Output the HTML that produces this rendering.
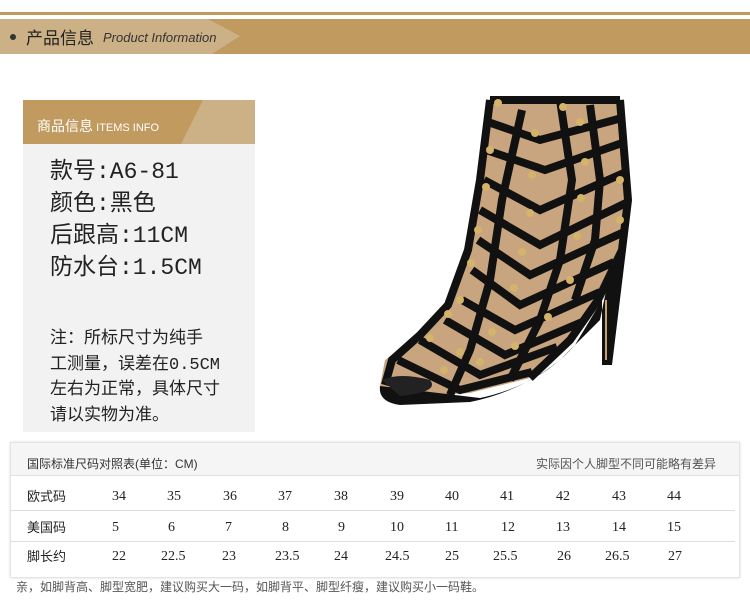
<!DOCTYPE html>
<html><head><meta charset="utf-8"><style>
*{margin:0;padding:0;box-sizing:border-box}
body{width:750px;height:604px;background:#fff;position:relative;overflow:hidden;font-family:"Liberation Sans","Noto Sans CJK SC",sans-serif;color:#222}
.abs{position:absolute}
</style></head><body>
<div class="abs" style="left:0;top:12px;width:750px;height:3px;background:#c09a5e"></div>
<svg class="abs" style="left:0;top:19px" width="750" height="35">
<rect x="0" y="0" width="750" height="35" fill="#c09a5e"/>
<polygon points="0,0 208,0 240,17 212,35 0,35" fill="#cdb186"/>
<circle cx="13" cy="18" r="3" fill="#333"/>
</svg>
<div class="abs" style="left:26px;top:27px;font-size:17px;color:#222;font-family:'Noto Sans CJK SC',sans-serif;line-height:20px">产品信息</div>
<div class="abs" style="left:103px;top:30px;font-size:13px;font-style:italic;color:#333;line-height:16px">Product Information</div>

<div class="abs" style="left:23px;top:100px;width:232px;height:332px;background:#f2f2f2"></div>
<svg class="abs" style="left:23px;top:100px" width="232" height="44">
<rect width="232" height="44" fill="#c09a5e"/>
<polygon points="180,0 232,0 232,44 158,44" fill="#cdb186"/>
</svg>
<div class="abs" style="left:37px;top:117px;font-size:14px;color:#fff;line-height:18px;font-family:'Noto Sans CJK SC',sans-serif">商品信息 <span style="font-size:11px;font-family:'Liberation Sans'">ITEMS INFO</span></div>
<div class="abs" style="left:50px;top:156px;font-size:23px;line-height:32px;color:#222;font-family:'Liberation Mono','Noto Sans CJK SC',monospace">款号:A6-81<br>颜色:黑色<br>后跟高:11CM<br>防水台:1.5CM</div>
<div class="abs" style="left:50px;top:327px;font-size:17px;line-height:25.5px;color:#222;font-family:'Liberation Mono','Noto Sans CJK SC',monospace">注：所标尺寸为纯手<br>工测量，误差在0.5CM<br>左右为正常，具体尺寸<br>请以实物为准。</div>

<svg class="abs" style="left:0;top:0" width="750" height="440">
<polygon points="490,97 620,97 630,200 624,250 600,300 570,340 530,378 470,393 395,398 380,386 385,360 420,335 448,305 468,250 480,180" fill="#c8a57e"/>
<g stroke="#111" stroke-width="8" fill="none" stroke-linejoin="miter">
<polyline points="490,100 620,100"/>
<polyline points="488,122 540,140 622,118"/>
<polyline points="486,150 545,170 625,142"/>
<polyline points="484,180 540,210 626,172"/>
<polyline points="480,210 540,245 628,202"/>
<polyline points="478,240 530,275 624,232"/>
<polyline points="472,270 520,305 614,262"/>
<polyline points="462,300 515,330 600,292"/>
<polyline points="445,320 505,355 582,322"/>
<polyline points="420,340 480,375 557,347"/>
<polyline points="398,360 460,390 532,372"/>
<polyline points="490,100 480,180 468,250 448,305 420,335 392,360 385,385"/>
<polyline points="560,100 572,180 560,260 540,320 510,380"/>
<polyline points="620,100 628,200 622,250 598,300 570,340 530,378"/>
<polyline points="522,110 502,200 490,280 470,350 450,395"/>
<polyline points="590,105 600,180 595,240 575,300"/>
</g>
<path d="M380,386 Q378,402 400,405 L470,402 Q520,392 560,360 L600,320 L612,262 L626,250 L612,365 L602,365 L602,300 L575,345 Q540,385 480,398 Z" fill="#111"/>
<path d="M606,300 L606,360" stroke="#c8a06a" stroke-width="2"/>
<path d="M382,380 Q400,372 430,380 Q440,392 400,396 Z" fill="#222"/>
<g fill="#d4b36a"><circle cx="498" cy="103" r="4"/><circle cx="563" cy="107" r="4"/><circle cx="580" cy="122" r="4"/><circle cx="535" cy="133" r="4"/><circle cx="490" cy="150" r="4"/><circle cx="585" cy="162" r="4"/><circle cx="532" cy="175" r="4"/><circle cx="486" cy="187" r="4"/><circle cx="581" cy="198" r="4"/><circle cx="530" cy="213" r="4"/><circle cx="478" cy="230" r="4"/><circle cx="577" cy="236" r="4"/><circle cx="522" cy="252" r="4"/><circle cx="471" cy="263" r="4"/><circle cx="570" cy="280" r="4"/><circle cx="514" cy="288" r="4"/><circle cx="460" cy="300" r="4"/><circle cx="548" cy="317" r="4"/><circle cx="448" cy="314" r="4"/><circle cx="492" cy="332" r="4"/><circle cx="430" cy="338" r="4"/><circle cx="515" cy="346" r="4"/><circle cx="460" cy="352" r="4"/><circle cx="444" cy="370" r="4"/><circle cx="480" cy="362" r="4"/><circle cx="620" cy="180" r="4"/><circle cx="620" cy="220" r="4"/></g>
</svg>

<div class="abs" style="left:10px;top:442px;width:730px;height:136px;border:1px solid #e4e4e4;box-shadow:0 0 3px #ddd;background:#fff"></div>
<div class="abs" style="left:11px;top:443px;width:728px;height:33px;background:#f5f5f5;border-bottom:1px solid #e0e0e0"></div>
<div class="abs" style="left:27px;top:455px;font-size:12px;color:#333">国际标准尺码对照表(单位：CM)</div>
<div class="abs" style="left:536px;top:455px;font-size:12px;color:#555">实际因个人脚型不同可能略有差异</div>
<div class="abs" style="left:10px;top:510px;width:725px;height:1px;background:#ddd"></div>
<div class="abs" style="left:10px;top:541px;width:725px;height:1px;background:#ddd"></div>
<div class="abs" style="left:27px;top:489px;font-size:13px;line-height:16px">欧式码</div>
<div class="abs" style="left:27px;top:520px;font-size:13px;line-height:16px">美国码</div>
<div class="abs" style="left:27px;top:549px;font-size:13px;line-height:16px">脚长约</div>
<div class="abs" style="left:0;top:489px;width:750px;font-family:'Liberation Serif',serif;font-size:14px;line-height:16px">
<span class="abs" style="left:112px">34</span><span class="abs" style="left:167px">35</span><span class="abs" style="left:223px">36</span><span class="abs" style="left:278px">37</span><span class="abs" style="left:334px">38</span><span class="abs" style="left:390px">39</span><span class="abs" style="left:445px">40</span><span class="abs" style="left:500px">41</span><span class="abs" style="left:556px">42</span><span class="abs" style="left:612px">43</span><span class="abs" style="left:667px">44</span></div>
<div class="abs" style="left:0;top:520px;width:750px;font-family:'Liberation Serif',serif;font-size:14px;line-height:16px">
<span class="abs" style="left:112px">5</span><span class="abs" style="left:168px">6</span><span class="abs" style="left:225px">7</span><span class="abs" style="left:282px">8</span><span class="abs" style="left:338px">9</span><span class="abs" style="left:390px">10</span><span class="abs" style="left:445px">11</span><span class="abs" style="left:501px">12</span><span class="abs" style="left:556px">13</span><span class="abs" style="left:612px">14</span><span class="abs" style="left:667px">15</span></div>
<div class="abs" style="left:0;top:549px;width:750px;font-family:'Liberation Serif',serif;font-size:14px;line-height:16px">
<span class="abs" style="left:112px">22</span><span class="abs" style="left:161px">22.5</span><span class="abs" style="left:222px">23</span><span class="abs" style="left:275px">23.5</span><span class="abs" style="left:334px">24</span><span class="abs" style="left:385px">24.5</span><span class="abs" style="left:445px">25</span><span class="abs" style="left:493px">25.5</span><span class="abs" style="left:557px">26</span><span class="abs" style="left:605px">26.5</span><span class="abs" style="left:668px">27</span></div>
<div class="abs" style="left:16px;top:580px;font-size:12px;color:#555;line-height:14px">亲，如脚背高、脚型宽肥，建议购买大一码，如脚背平、脚型纤瘦，建议购买小一码鞋。</div>
</body></html>
